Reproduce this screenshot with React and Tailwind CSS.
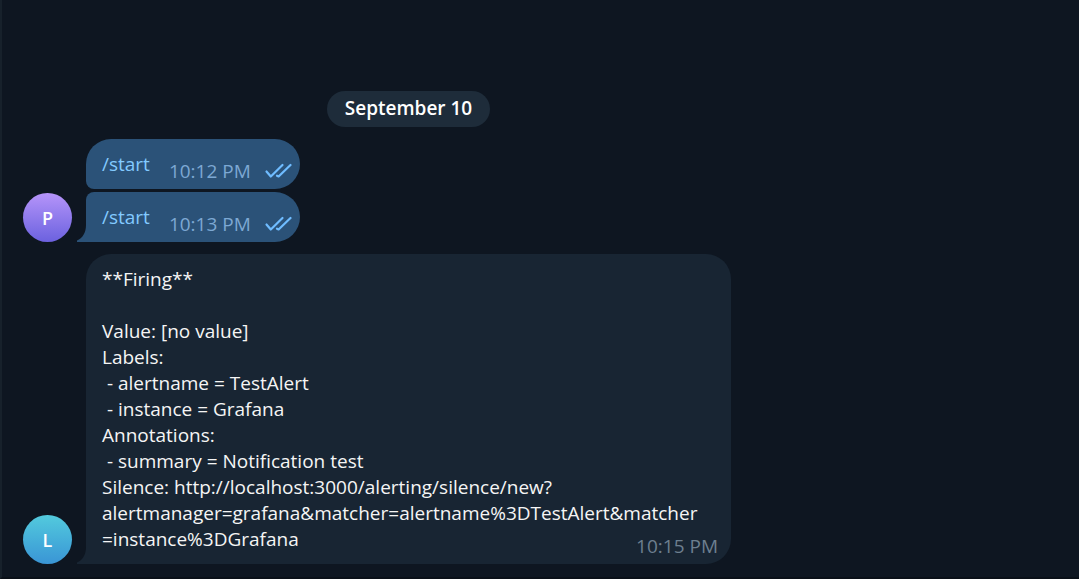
const FONT = 'font-["Open_Sans","Noto_Sans",sans-serif]';

const alertLines = [
  "**Firing**",
  "",
  "Value: [no value]",
  "Labels:",
  " - alertname = TestAlert",
  " - instance = Grafana",
  "Annotations:",
  " - summary = Notification test",
  "Silence: http://localhost:3000/alerting/silence/new?",
  "alertmanager=grafana&matcher=alertname%3DTestAlert&matcher",
];

function Avatar({ letter, className }) {
  return (
    <div
      className={`flex size-[49px] shrink-0 items-center justify-center rounded-full bg-linear-to-b text-lg font-semibold text-white ${className}`}
    >
      {letter}
    </div>
  );
}

function Tail({ className }) {
  return (
    <svg
      className={`absolute bottom-0 -left-[9px] h-5 w-[10px] ${className}`}
      viewBox="0 0 10 20"
      fill="currentColor"
      aria-hidden="true"
    >
      <path d="M9 0H10V20H0V18.6C5.5 16 9 11 9 3Z" />
    </svg>
  );
}

function ReadTicks() {
  return (
    <svg
      className="h-[18px] w-7 text-[#6fbcff]"
      viewBox="0 0 28 18"
      fill="none"
      stroke="currentColor"
      strokeWidth="2.2"
      strokeLinecap="round"
      strokeLinejoin="round"
      role="img"
      aria-label="Read"
    >
      <path d="M2.5 9.5L6.8 14.5L18.5 3" />
      <path d="M13 13.7L14.6 14.5L26.5 3" />
    </svg>
  );
}

function Command({ time, className, children }) {
  return (
    <div
      className={`relative flex h-[50px] w-fit items-start rounded-r-[25px] bg-[#2b5278] pr-2 pl-4 ${className}`}
    >
      <a href="#start" className="pt-3 text-[#83caff]">
        /start
      </a>
      <time className="ml-[19px] pt-[19px] text-[#7da8d3]">{time}</time>
      <span className="ml-[13px] pt-[23px]">
        <ReadTicks />
      </span>
      {children}
    </div>
  );
}

export default function App() {
  return (
    <main
      className={`min-h-screen border-b-2 border-l-2 border-b-[#0a1018] border-l-[#17212b] bg-[#0e1621] pt-[91px] pb-[13px] pl-[21px] text-[19px] leading-[26px] ${FONT}`}
    >
      <div className="flex max-w-[771px] justify-center">
        <h1 className="rounded-full bg-[#1e2c3a] px-[18px] pt-1 pb-1.5 font-semibold text-white">
          September 10
        </h1>
      </div>

      <section className="mt-3 flex items-end gap-[14px]">
        <Avatar letter="P" className="from-[#b694f9] to-[#6c61df]" />
        <div className="flex flex-col gap-[3px]">
          <Command time="10:12 PM" className="rounded-tl-[25px] rounded-bl-lg" />
          <Command time="10:13 PM" className="rounded-tl-lg">
            <Tail className="text-[#2b5278]" />
          </Command>
        </div>
      </section>

      <section className="mt-3 flex items-end gap-[14px]">
        <Avatar letter="L" className="from-[#53cadd] to-[#3a95d5]" />
        <article className="relative w-full max-w-[645px] rounded-t-[25px] rounded-br-[25px] bg-[#182533] pt-3 pr-[13px] pb-[5px] pl-4 text-[#f5f5f5]">
          {alertLines.map((line, index) => (
            <p key={index} className="min-h-[26px] wrap-anywhere whitespace-pre-wrap">
              {line}
            </p>
          ))}
          <div className="flex h-[33px] justify-between">
            <p>=instance%3DGrafana</p>
            <time className="self-end text-[#6d7f8f]">10:15 PM</time>
          </div>
          <Tail className="text-[#182533]" />
        </article>
      </section>
    </main>
  );
}
